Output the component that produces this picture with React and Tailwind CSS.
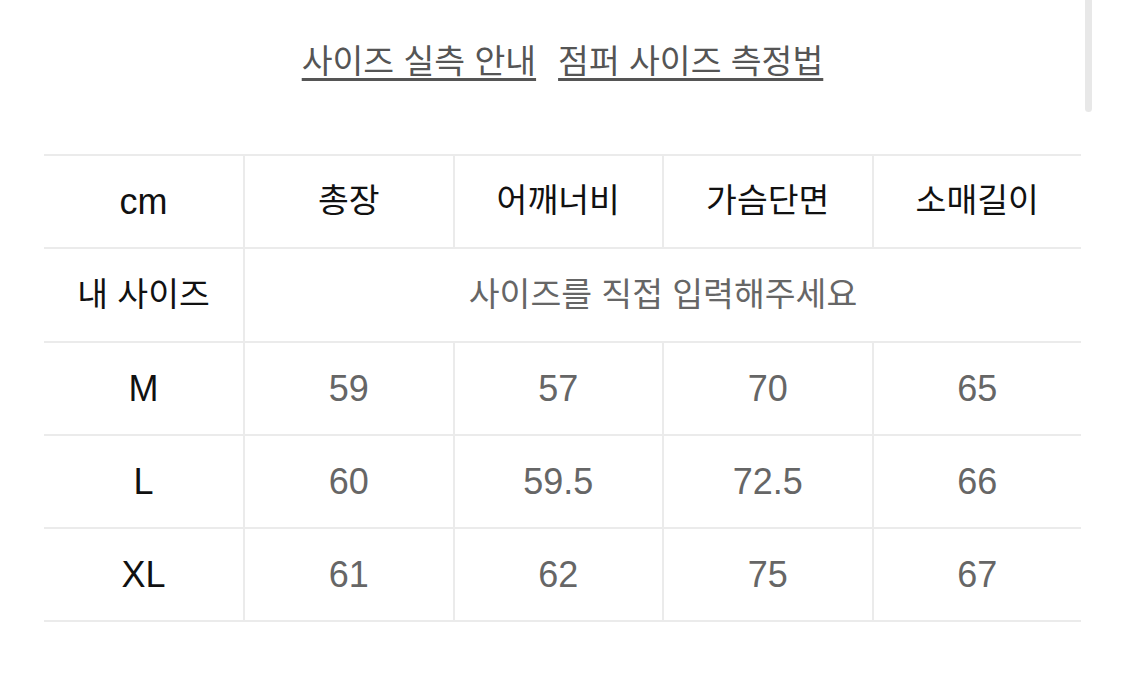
const rows = [
  { size: "M", values: ["59", "57", "70", "65"] },
  { size: "L", values: ["60", "59.5", "72.5", "66"] },
  { size: "XL", values: ["61", "62", "75", "67"] },
];

const heads = ["총장", "어깨너비", "가슴단면", "소매길이"];

export default function App() {
  return (
    <div
      className="relative min-h-[676px] bg-white px-[44px] pt-[37px]"
      style={{ fontFamily: '"Liberation Sans", "Noto Sans CJK KR", sans-serif' }}
    >
      {/* scrollbar thumb */}
      <div className="absolute right-[33px] top-0 w-[7px] h-[112px] rounded-b-sm bg-[#e8e8e8]" />

      <div className="flex justify-center gap-[22px] text-[33.5px] leading-[50px] text-[#555]">
        <a className="underline underline-offset-[5px] decoration-[2.5px]">사이즈 실측 안내</a>
        <a className="underline underline-offset-[5px] decoration-[2.5px]">점퍼 사이즈 측정법</a>
      </div>

      <div className="mt-[67px] grid grid-cols-[199px_repeat(4,1fr)] border-b-2 border-[#ebebeb] text-[33.5px]">
        <div className="h-[93px] flex items-center justify-center border-t-2 border-[#ebebeb] text-[36px] text-[#111]">
          cm
        </div>
        {heads.map((h) => (
          <div
            key={h}
            className="h-[93px] flex items-center justify-center border-t-2 border-l-2 border-[#ebebeb] text-[#111]"
          >
            {h}
          </div>
        ))}

        <div className="h-[94px] flex items-center justify-center border-t-2 border-[#ebebeb] text-[#111]">
          내 사이즈
        </div>
        <div className="col-span-4 h-[94px] flex items-center justify-center border-t-2 border-l-2 border-[#ebebeb] text-[#666]">
          사이즈를 직접 입력해주세요
        </div>

        {rows.map((r) => (
          <div key={r.size} className="contents">
            <div className="h-[93px] flex items-center justify-center border-t-2 border-[#ebebeb] text-[36px] text-[#111]">
              {r.size}
            </div>
            {r.values.map((v, i) => (
              <div
                key={i}
                className="h-[93px] flex items-center justify-center border-t-2 border-l-2 border-[#ebebeb] text-[36px] text-[#666]"
              >
                {v}
              </div>
            ))}
          </div>
        ))}
      </div>
    </div>
  );
}
